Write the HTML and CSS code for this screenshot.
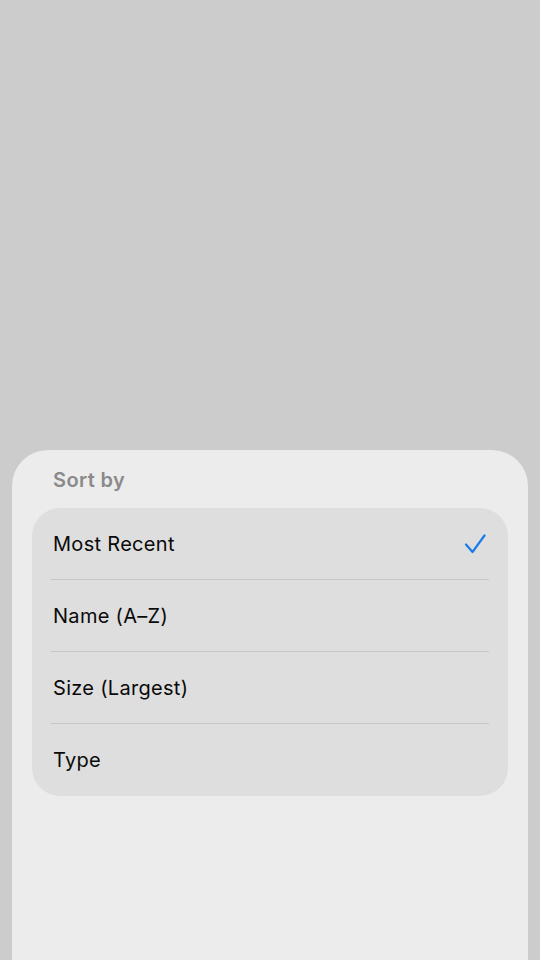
FILE: index.html
```html
<!DOCTYPE html>
<html lang="en">
<head>
<meta charset="utf-8">
<title>Sort by</title>
<link rel="stylesheet" href="styles.css">
</head>
<body>
<div class="screen">
  <div class="sheet">
    <div class="sheet-title">Sort by</div>
    <div class="group">
      <div class="row">
        <span class="label">Most Recent</span>
        <svg class="check" width="22" height="22" viewBox="0 0 22 22"><path d="M2 11.5 L8.5 19 L20.5 2.5" fill="none" stroke="#1a7ee6" stroke-width="2.2" stroke-linecap="round" stroke-linejoin="round"/></svg>
      </div>
      <div class="row"><span class="label">Name (A–Z)</span></div>
      <div class="row"><span class="label">Size (Largest)</span></div>
      <div class="row last"><span class="label">Type</span></div>
    </div>
  </div>
</div>
</body>
</html>
```

FILE: styles.css
```css
html, body {
  margin: 0;
  padding: 0;
  height: 960px;
  overflow: hidden;
  background: #cccccc;
  font-family: Inter, "Noto Sans", "Liberation Sans", sans-serif;
}
.screen {
  height: 960px;
  padding-top: 450px;
  box-sizing: border-box;
  overflow: hidden;
}
.sheet {
  margin: 0 12px;
  height: 510px;
  background: #ececec;
  border-radius: 36px 36px 0 0;
  padding: 17px 20px 0;
  box-sizing: border-box;
}
.sheet-title {
  padding-left: 21px;
  font-size: 20px;
  line-height: 26px;
  font-weight: 600;
  color: #8a8a8a;
  letter-spacing: 0.4px;
}
.group {
  margin-top: 15px;
  background: #dedede;
  border-radius: 28px;
  overflow: hidden;
}
.row {
  height: 71px;
  display: flex;
  align-items: center;
  justify-content: space-between;
  padding: 0 22px 0 21px;
  box-sizing: border-box;
}
.row.last {
  height: 72px;
}
.row + .row {
  height: 72px;
  border-top: 1px solid #c6c6c6;
  border-image: linear-gradient(to right, transparent 20px, #c6c6c6 20px, #c6c6c6 calc(100% - 20px), transparent calc(100% - 20px)) 1;
}
.row + .row.last {
  height: 73px;
}
.label {
  font-size: 20px;
  color: #0a0a0a;
  letter-spacing: 0.3px;
}
.check {
  display: block;
}
```
